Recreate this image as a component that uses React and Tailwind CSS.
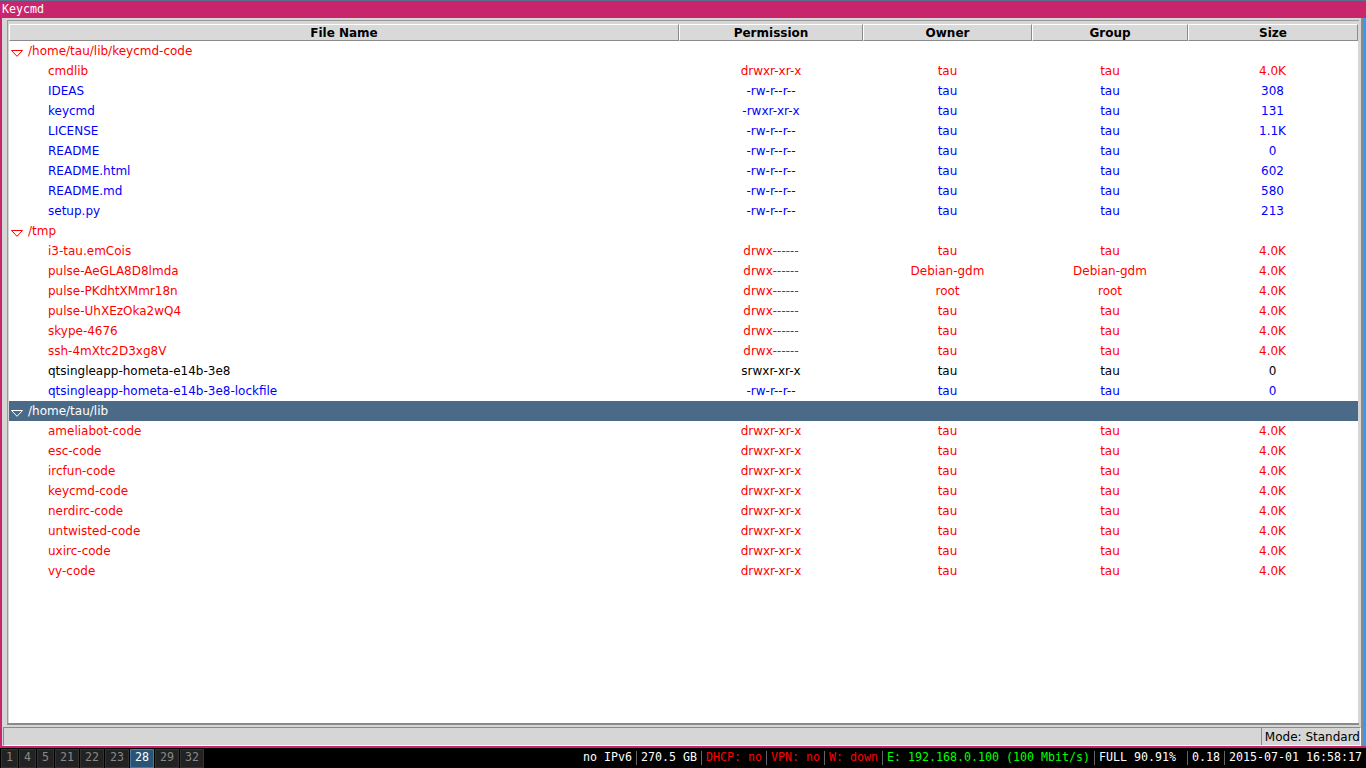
import React from "react";

const COL = {
  r: "text-[#ff0000]",
  b: "text-[#0000ff]",
  k: "text-black",
  w: "text-white",
};

const groups = [
  {
    path: "/home/tau/lib/keycmd-code",
    sel: false,
    items: [
      ["cmdlib", "drwxr-xr-x", "tau", "tau", "4.0K", "r"],
      ["IDEAS", "-rw-r--r--", "tau", "tau", "308", "b"],
      ["keycmd", "-rwxr-xr-x", "tau", "tau", "131", "b"],
      ["LICENSE", "-rw-r--r--", "tau", "tau", "1.1K", "b"],
      ["README", "-rw-r--r--", "tau", "tau", "0", "b"],
      ["README.html", "-rw-r--r--", "tau", "tau", "602", "b"],
      ["README.md", "-rw-r--r--", "tau", "tau", "580", "b"],
      ["setup.py", "-rw-r--r--", "tau", "tau", "213", "b"],
    ],
  },
  {
    path: "/tmp",
    sel: false,
    items: [
      ["i3-tau.emCois", "drwx------", "tau", "tau", "4.0K", "r"],
      ["pulse-AeGLA8D8lmda", "drwx------", "Debian-gdm", "Debian-gdm", "4.0K", "r"],
      ["pulse-PKdhtXMmr18n", "drwx------", "root", "root", "4.0K", "r"],
      ["pulse-UhXEzOka2wQ4", "drwx------", "tau", "tau", "4.0K", "r"],
      ["skype-4676", "drwx------", "tau", "tau", "4.0K", "r"],
      ["ssh-4mXtc2D3xg8V", "drwx------", "tau", "tau", "4.0K", "r"],
      ["qtsingleapp-hometa-e14b-3e8", "srwxr-xr-x", "tau", "tau", "0", "k"],
      ["qtsingleapp-hometa-e14b-3e8-lockfile", "-rw-r--r--", "tau", "tau", "0", "b"],
    ],
  },
  {
    path: "/home/tau/lib",
    sel: true,
    items: [
      ["ameliabot-code", "drwxr-xr-x", "tau", "tau", "4.0K", "r"],
      ["esc-code", "drwxr-xr-x", "tau", "tau", "4.0K", "r"],
      ["ircfun-code", "drwxr-xr-x", "tau", "tau", "4.0K", "r"],
      ["keycmd-code", "drwxr-xr-x", "tau", "tau", "4.0K", "r"],
      ["nerdirc-code", "drwxr-xr-x", "tau", "tau", "4.0K", "r"],
      ["untwisted-code", "drwxr-xr-x", "tau", "tau", "4.0K", "r"],
      ["uxirc-code", "drwxr-xr-x", "tau", "tau", "4.0K", "r"],
      ["vy-code", "drwxr-xr-x", "tau", "tau", "4.0K", "r"],
    ],
  },
];

function Tri({ color }) {
  return (
    <svg width="12" height="7" viewBox="0 0 12 7" className="shrink-0">
      <polygon points="0.5,0.5 11.5,0.5 6,6.3" fill="none" stroke={color} strokeWidth="1" />
    </svg>
  );
}

function Row({ cells, color }) {
  const c = COL[color];
  return (
    <div className={`flex h-[20px] items-center ${c}`}>
      <div className="w-[670px] pl-[39px] whitespace-nowrap">{cells[0]}</div>
      <div className="w-[184px] text-center">{cells[1]}</div>
      <div className="w-[169px] text-center">{cells[2]}</div>
      <div className="w-[156px] text-center">{cells[3]}</div>
      <div className="w-[169px] text-center">{cells[4]}</div>
    </div>
  );
}

function HeadCell({ w, children }) {
  return (
    <div
      className={`${w} h-full flex items-center justify-center border-l border-t border-l-white border-t-white border-r border-b border-r-[#8a8a8a] border-b-[#8a8a8a] bg-[#d9d9d9] font-bold`}
    >
      {children}
    </div>
  );
}

const status = [
  ["no IPv6", "text-white"],
  ["270.5 GB", "text-white"],
  ["DHCP: no", "text-[#ff0000]"],
  ["VPN: no", "text-[#ff0000]"],
  ["W: down", "text-[#ff0000]"],
  ["E: 192.168.0.100 (100 Mbit/s)", "text-[#00ff00]"],
  ["FULL 90.91% ", "text-white"],
  ["0.18", "text-white"],
  ["2015-07-01 16:58:17", "text-white"],
];

const ws = ["1", "4", "5", "21", "22", "23", "28", "29", "32"];

export default function App() {
  return (
    <div className="w-[1366px] h-[768px] overflow-hidden flex flex-col bg-black font-['DejaVu_Sans',sans-serif] text-[12px]">
      {/* window */}
      <div className="h-[748px] flex flex-col">
        {/* title */}
        <div className="h-[18px] bg-[#c9256d] border-t border-t-[#5c6f8e] flex items-center pl-[2px] font-['DejaVu_Sans_Mono',monospace] text-[11.6px] text-white leading-none">
          Keycmd
        </div>
        <div className="flex-1 flex min-h-0">
          <div className="w-[2px] bg-[#c9256d]" />
          <div className="flex-1 flex flex-col bg-[#d6d6d6] border-r-2 border-r-[#8a8a8a] min-w-0">
            {/* tree frame */}
            <div className="ml-[5px] mr-[2px] mt-[2px] h-[705px] flex flex-col border-t border-l border-[#9a9a9a] border-b-2 border-b-[#8a8a8a] pt-[3px] pl-px bg-[#d6d6d6]">
              <div className="flex-1 flex flex-col bg-white w-[1349px]">
                <div className="flex h-[17px] text-black">
                  <HeadCell w="w-[670px]">File Name</HeadCell>
                  <HeadCell w="w-[184px]">Permission</HeadCell>
                  <HeadCell w="w-[169px]">Owner</HeadCell>
                  <HeadCell w="w-[156px]">Group</HeadCell>
                  <HeadCell w="w-[170px]">Size</HeadCell>
                </div>
                {groups.map((g) => (
                  <div key={g.path} className="flex flex-col">
                    <div
                      className={`flex h-[20px] items-center pl-[2px] ${g.sel ? "bg-[#4b6a87] text-white" : "text-[#ff0000]"}`}
                    >
                      <div className="mt-[5px]">
                        <Tri color={g.sel ? "#ffffff" : "#ff0000"} />
                      </div>
                      <span className="ml-[5px]">{g.path}</span>
                    </div>
                    {g.items.map((it) => (
                      <Row key={it[0]} cells={it} color={it[5]} />
                    ))}
                  </div>
                ))}
              </div>
            </div>
            {/* status bar */}
            <div className="mt-[2px] ml-px mr-0 h-[19px] flex border-t border-l border-[#8a8a8a] border-b border-r border-b-white border-r-white">
              <div className="flex-1" />
              <div className="h-full flex items-center pl-[3px] pr-0 border-l border-[#8a8a8a] text-black">
                Mode: Standard
              </div>
            </div>
          </div>
          <div className="w-[3px] bg-[#2e9ef4]" />
        </div>
        <div className="h-[2px] bg-[#c9256d]" />
      </div>
      {/* i3bar */}
      <div className="h-[20px] flex items-center bg-black font-['DejaVu_Sans_Mono',monospace] text-[11.63px] leading-none">
        <div className="flex gap-px pl-px">
          {ws.map((w) => (
            <div
              key={w}
              className={`h-[19px] ${w.length === 1 ? "w-[17px]" : "w-[24px]"} flex items-center justify-center border ${
                w === "28" ? "bg-[#285577] border-[#4c7899] text-white" : "bg-[#222222] border-[#333333] text-[#888888]"
              }`}
            >
              {w}
            </div>
          ))}
        </div>
        <div className="flex-1" />
        <div className="flex items-center pr-[4px] whitespace-pre">
          {status.map(([t, c], i) => (
            <React.Fragment key={i}>
              {i > 0 && (
                <div className="w-[9px] h-[14px] flex justify-center">
                  <div className="w-px h-full bg-[#666666]" />
                </div>
              )}
              <span className={c}>{t}</span>
            </React.Fragment>
          ))}
        </div>
      </div>
    </div>
  );
}
